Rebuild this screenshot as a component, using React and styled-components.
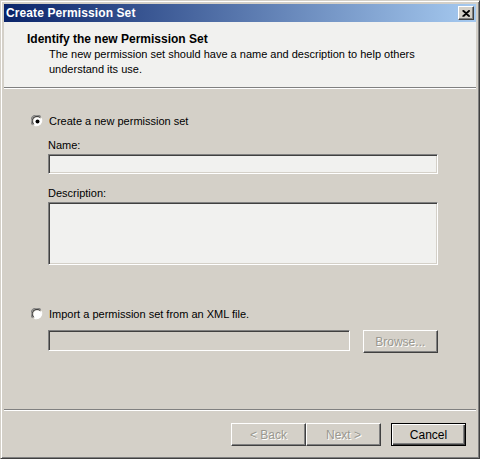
import React from 'react'
import styled, { createGlobalStyle } from 'styled-components'

const GlobalStyle = createGlobalStyle`
  html, body {
    margin: 0;
    padding: 0;
    background: #d4d0c8;
  }
  * {
    box-sizing: border-box;
  }
`

const Window = styled.div`
  width: 480px;
  height: 459px;
  display: flex;
  flex-direction: column;
  background: #d4d0c8;
  padding: 3px;
  border: 1px solid;
  border-color: #d4d0c8 #404040 #404040 #d4d0c8;
  box-shadow: inset 1px 1px #ffffff, inset -1px -1px #808080;
  font-family: "Liberation Sans", Arial, sans-serif;
  font-size: 11px;
  color: #000;
`

const TitleBar = styled.div`
  height: 18px;
  flex: none;
  display: flex;
  align-items: center;
  justify-content: space-between;
  padding: 0 2px 0 2px;
  background: linear-gradient(to right, #0a246a, #a6caf0);
`

const TitleText = styled.span`
  color: #fff;
  font-weight: bold;
  font-size: 12px;
  letter-spacing: 0.1px;
`

const CloseButton = styled.div`
  width: 16px;
  height: 14px;
  display: flex;
  align-items: center;
  justify-content: center;
  background: #d4d0c8;
  border: 1px solid;
  border-color: #fff #404040 #404040 #fff;
  box-shadow: inset -1px -1px #808080;
`

const Header = styled.div`
  height: 65px;
  flex: none;
  background: #f1f1ef;
  padding: 10px 0 0 23px;
`

const HeaderTitle = styled.div`
  font-weight: bold;
  font-size: 12px;
  line-height: 15px;
`

const HeaderText = styled.div`
  padding-left: 22px;
  line-height: 15px;
  width: 400px;
`

const Rule = styled.div`
  height: 2px;
  flex: none;
  border-top: 1px solid #808080;
  border-bottom: 1px solid #ffffff;
`

const Body = styled.div`
  flex: 1;
  padding: 25px 38px 0 27px;
  display: flex;
  flex-direction: column;
`

const OptionRow = styled.label`
  display: flex;
  align-items: center;
  gap: 5px;
  line-height: 14px;
  height: 14px;
  margin-top: ${p => p.$top || 0}px;
`

const Fields = styled.div`
  padding-left: 17px;
  display: flex;
  flex-direction: column;
`

const FieldLabel = styled.div`
  line-height: 14px;
  margin-top: ${p => p.$top}px;
  margin-bottom: 2px;
`

const Sunken = styled.div`
  height: ${p => p.$h}px;
  width: ${p => (p.$w ? `${p.$w}px` : 'auto')};
  background: ${p => (p.$disabled ? '#d4d0c8' : '#f1f1ef')};
  border: 1px solid;
  border-color: #808080 #ffffff #ffffff #808080;
  box-shadow: inset 1px 1px #404040, inset -1px -1px #d4d0c8;
`

const FileRow = styled.div`
  display: flex;
  align-items: flex-start;
  gap: 13px;
  margin-top: 9px;
`

const Button = styled.div`
  width: ${p => p.$w || 75}px;
  height: 23px;
  display: flex;
  align-items: center;
  justify-content: center;
  background: #d4d0c8;
  border: 1px solid;
  border-color: ${p => (p.$default ? '#000' : '#fff #404040 #404040 #fff')};
  box-shadow: ${p =>
    p.$default
      ? 'inset 1px 1px #fff, inset -1px -1px #404040, inset -2px -2px #808080'
      : 'inset -1px -1px #808080'};
  color: ${p => (p.$disabled ? '#9a9890' : '#000')};
  text-shadow: ${p => (p.$disabled ? '1px 1px #fff' : 'none')};
  font-size: 12px;
`

const Footer = styled.div`
  height: 44px;
  flex: none;
  display: flex;
  justify-content: flex-end;
  align-items: flex-start;
  padding: 12px 10px 0 0;
`

const ButtonPair = styled.div`
  display: flex;
  margin-right: 10px;
`

const Radio = ({ checked }) => (
  <svg width="13" height="13" viewBox="0 0 12 12" style={{ flex: 'none' }}>
    <path d="M1.5 9 A5 5 0 0 1 9 1.5" fill="none" stroke="#808080" strokeWidth="1" />
    <path d="M2.5 8.5 A4 4 0 0 1 8.5 2.5" fill="none" stroke="#404040" strokeWidth="1" />
    <path d="M9.5 3 A5 5 0 0 1 3 9.5" fill="none" stroke="#ffffff" strokeWidth="1" />
    <circle cx="6" cy="6" r="3.6" fill="#ffffff" />
    {checked && <circle cx="6" cy="6" r="1.8" fill="#000" />}
  </svg>
)

const App = () => {
  return (
    <>
      <GlobalStyle />
      <Window>
        <TitleBar>
          <TitleText>Create Permission Set</TitleText>
          <CloseButton>
            <svg width="8" height="7" viewBox="0 0 8 7">
              <path d="M0.5 0.5 L7 6.5 M1.5 0.5 L8 6.5 M7 0.5 L0.5 6.5 M8 0.5 L1.5 6.5" stroke="#000" strokeWidth="1.2" />
            </svg>
          </CloseButton>
        </TitleBar>
        <Header>
          <HeaderTitle>Identify the new Permission Set</HeaderTitle>
          <HeaderText>
            The new permission set should have a name and description to help others understand its use.
          </HeaderText>
        </Header>
        <Rule />
        <Body>
          <OptionRow>
            <Radio checked />
            Create a new permission set
          </OptionRow>
          <Fields>
            <FieldLabel $top={10}>Name:</FieldLabel>
            <Sunken $h={20} />
            <FieldLabel $top={12}>Description:</FieldLabel>
            <Sunken $h={63} />
          </Fields>
          <OptionRow $top={42}>
            <Radio />
            Import a permission set from an XML file.
          </OptionRow>
          <Fields>
            <FileRow>
              <Sunken $h={21} $w={304} $disabled />
              <Button $w={76} $disabled>Browse...</Button>
            </FileRow>
          </Fields>
        </Body>
        <Rule />
        <Footer>
          <ButtonPair>
            <Button $disabled>&lt; Back</Button>
            <Button $disabled>Next &gt;</Button>
          </ButtonPair>
          <Button $default>Cancel</Button>
        </Footer>
      </Window>
    </>
  )
}

export default App
